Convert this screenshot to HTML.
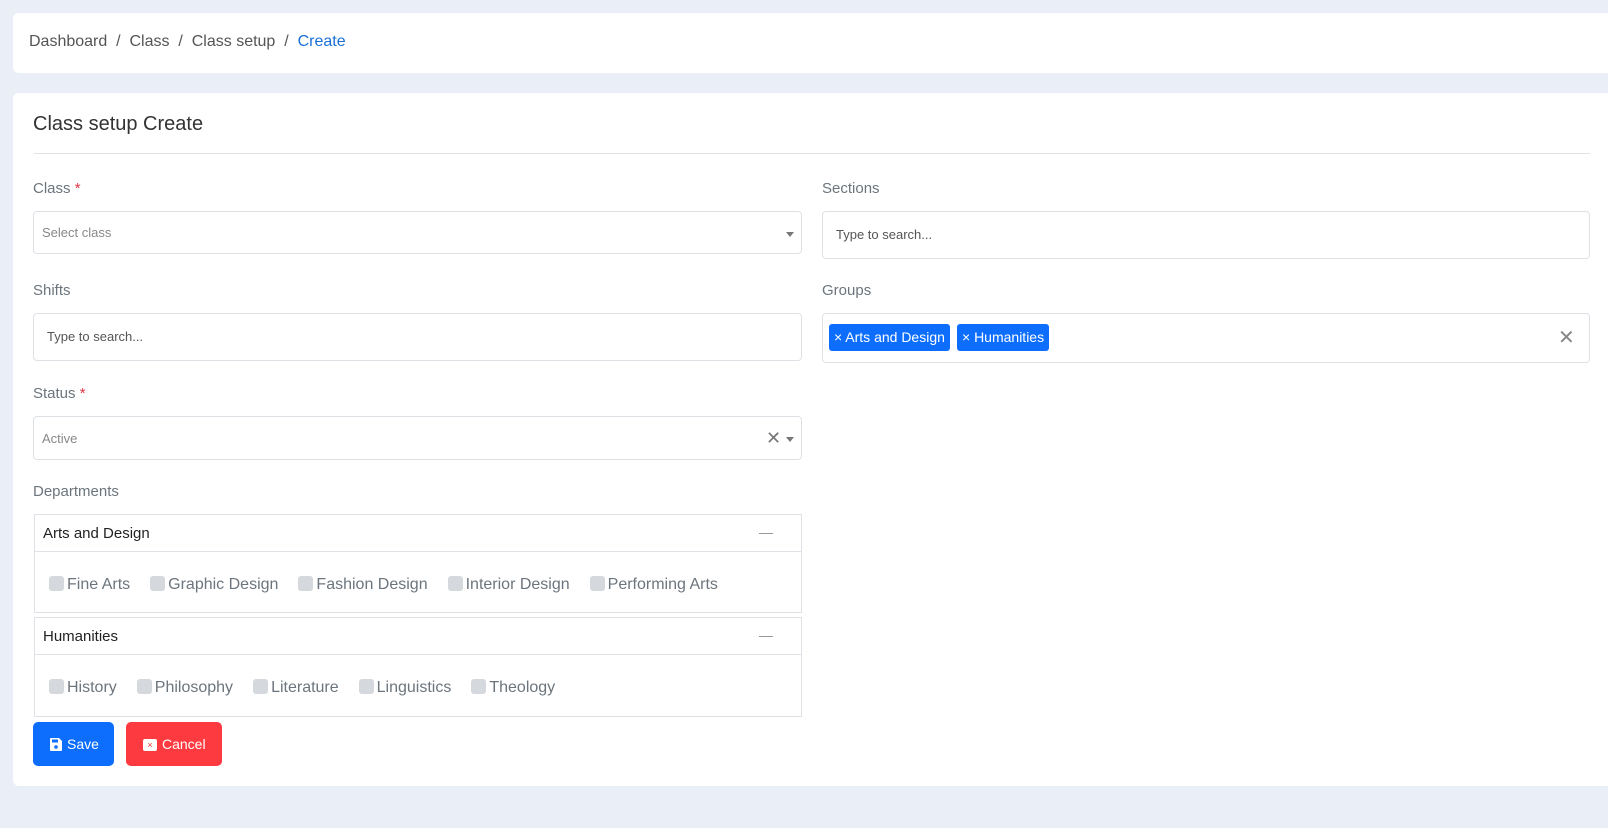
<!DOCTYPE html>
<html><head><meta charset="utf-8"><style>
*{box-sizing:border-box;margin:0;padding:0}
body{width:1608px;height:828px;background:#eaeff7;font-family:"Liberation Sans",sans-serif;position:relative;overflow:hidden}
.abs{position:absolute}
.card{position:absolute;background:#fff;border-radius:6px}
.lbl{position:absolute;font-size:15px;color:#6c757d}
.req{color:#dc3545}
.inp{position:absolute;border:1px solid #dde1e6;border-radius:4px;background:#fff}
.ph{position:absolute;font-size:13px;color:#888}
.ph2{position:absolute;font-size:13px;color:#555}
.caret{position:absolute;width:0;height:0;border-left:4px solid transparent;border-right:4px solid transparent;border-top:5px solid #777}
.panel{position:absolute;left:34px;width:768px;border:1px solid #dee2e6}
.ph-h{height:37px;border-bottom:1px solid #dee2e6;position:relative}
.ph-h span{position:absolute;left:8px;top:10px;font-size:15px;color:#222}
.ph-h i{position:absolute;right:28px;top:18px;width:14px;height:1px;background:#999}
.row{position:absolute;left:14px;top:61px;font-size:16px;color:#6c757d;white-space:nowrap}
.row b{display:inline-block;width:15px;height:15px;background:#d5d8dc;border-radius:3px;vertical-align:-2px;margin-right:3px;font-weight:normal}
.row em{font-style:normal;margin-right:20px}
.tag{position:absolute;top:11px;height:27px;background:#0d6efd;color:#fff;font-size:14px;border-radius:3px;padding:5px 5px 0 5px;white-space:nowrap}
.btn{position:absolute;top:722px;height:44px;border-radius:5px;color:#fff;font-size:14px}
</style></head><body>
<div class="card" style="left:13px;top:13px;width:1600px;height:60px">
  <div class="abs" style="left:16px;top:20px;font-size:16px;color:#555;white-space:nowrap">Dashboard &nbsp;/&nbsp; Class &nbsp;/&nbsp; Class setup &nbsp;/&nbsp; <span style="color:#1a6fd8">Create</span></div>
</div>
<div class="card" style="left:13px;top:93px;width:1600px;height:693px"></div>
<div class="abs" style="left:33px;top:113px;font-size:20px;color:#333">Class setup Create</div>
<div class="abs" style="left:34px;top:153px;width:1556px;height:1px;background:#dee2e6"></div>

<div class="lbl" style="left:33px;top:180px">Class <span class="req">*</span></div>
<div class="inp" style="left:33px;top:211px;width:769px;height:43px"></div>
<div class="ph" style="left:42px;top:225px">Select class</div>
<div class="caret" style="left:786px;top:232px"></div>

<div class="lbl" style="left:822px;top:180px">Sections</div>
<div class="inp" style="left:822px;top:211px;width:768px;height:48px"></div>
<div class="ph2" style="left:836px;top:227px">Type to search...</div>

<div class="lbl" style="left:33px;top:282px">Shifts</div>
<div class="inp" style="left:33px;top:313px;width:769px;height:48px"></div>
<div class="ph2" style="left:47px;top:329px">Type to search...</div>

<div class="lbl" style="left:822px;top:282px">Groups</div>
<div class="inp" style="left:822px;top:313px;width:768px;height:50px"></div>
<div class="tag" style="left:829px;top:324px">× Arts and Design</div>
<div class="tag" style="left:957px;top:324px">× Humanities</div>
<div class="abs" style="left:1558px;top:325px;font-size:20px;color:#888">✕</div>

<div class="lbl" style="left:33px;top:385px">Status <span class="req">*</span></div>
<div class="inp" style="left:33px;top:416px;width:769px;height:44px"></div>
<div class="ph" style="left:42px;top:431px">Active</div>
<div class="abs" style="left:766px;top:428px;font-size:18px;color:#777">✕</div>
<div class="caret" style="left:786px;top:437px"></div>

<div class="lbl" style="left:33px;top:483px">Departments</div>
<div class="panel" style="top:514px;height:99px">
  <div class="ph-h"><span>Arts and Design</span><i></i></div>
  <div class="row"><b></b><em>Fine Arts</em><b></b><em>Graphic Design</em><b></b><em>Fashion Design</em><b></b><em>Interior Design</em><b></b><em>Performing Arts</em></div>
</div>
<div class="panel" style="top:617px;height:100px">
  <div class="ph-h"><span>Humanities</span><i></i></div>
  <div class="row"><b></b><em>History</em><b></b><em>Philosophy</em><b></b><em>Literature</em><b></b><em>Linguistics</em><b></b><em>Theology</em></div>
</div>

<div class="btn" style="left:33px;width:81px;background:#0d6efd">
  <svg class="abs" style="left:17px;top:16px" width="12" height="13" viewBox="0 0 12 13"><path d="M1 0h8l3 3v9a1 1 0 0 1-1 1H1a1 1 0 0 1-1-1V1a1 1 0 0 1 1-1z" fill="#fff"/><rect x="2" y="1.5" width="6" height="3" fill="#0d6efd"/><circle cx="6" cy="9" r="1.8" fill="#0d6efd"/></svg>
  <span class="abs" style="left:34px;top:14px">Save</span></div>
<div class="btn" style="left:126px;width:96px;background:#fd3a3f">
  <span class="abs" style="left:17px;top:17px;width:14px;height:12px;background:#fff;border-radius:2px;color:#e33;font-size:9px;text-align:center;line-height:12px">×</span>
  <span class="abs" style="left:36px;top:14px">Cancel</span></div>
</body></html>
